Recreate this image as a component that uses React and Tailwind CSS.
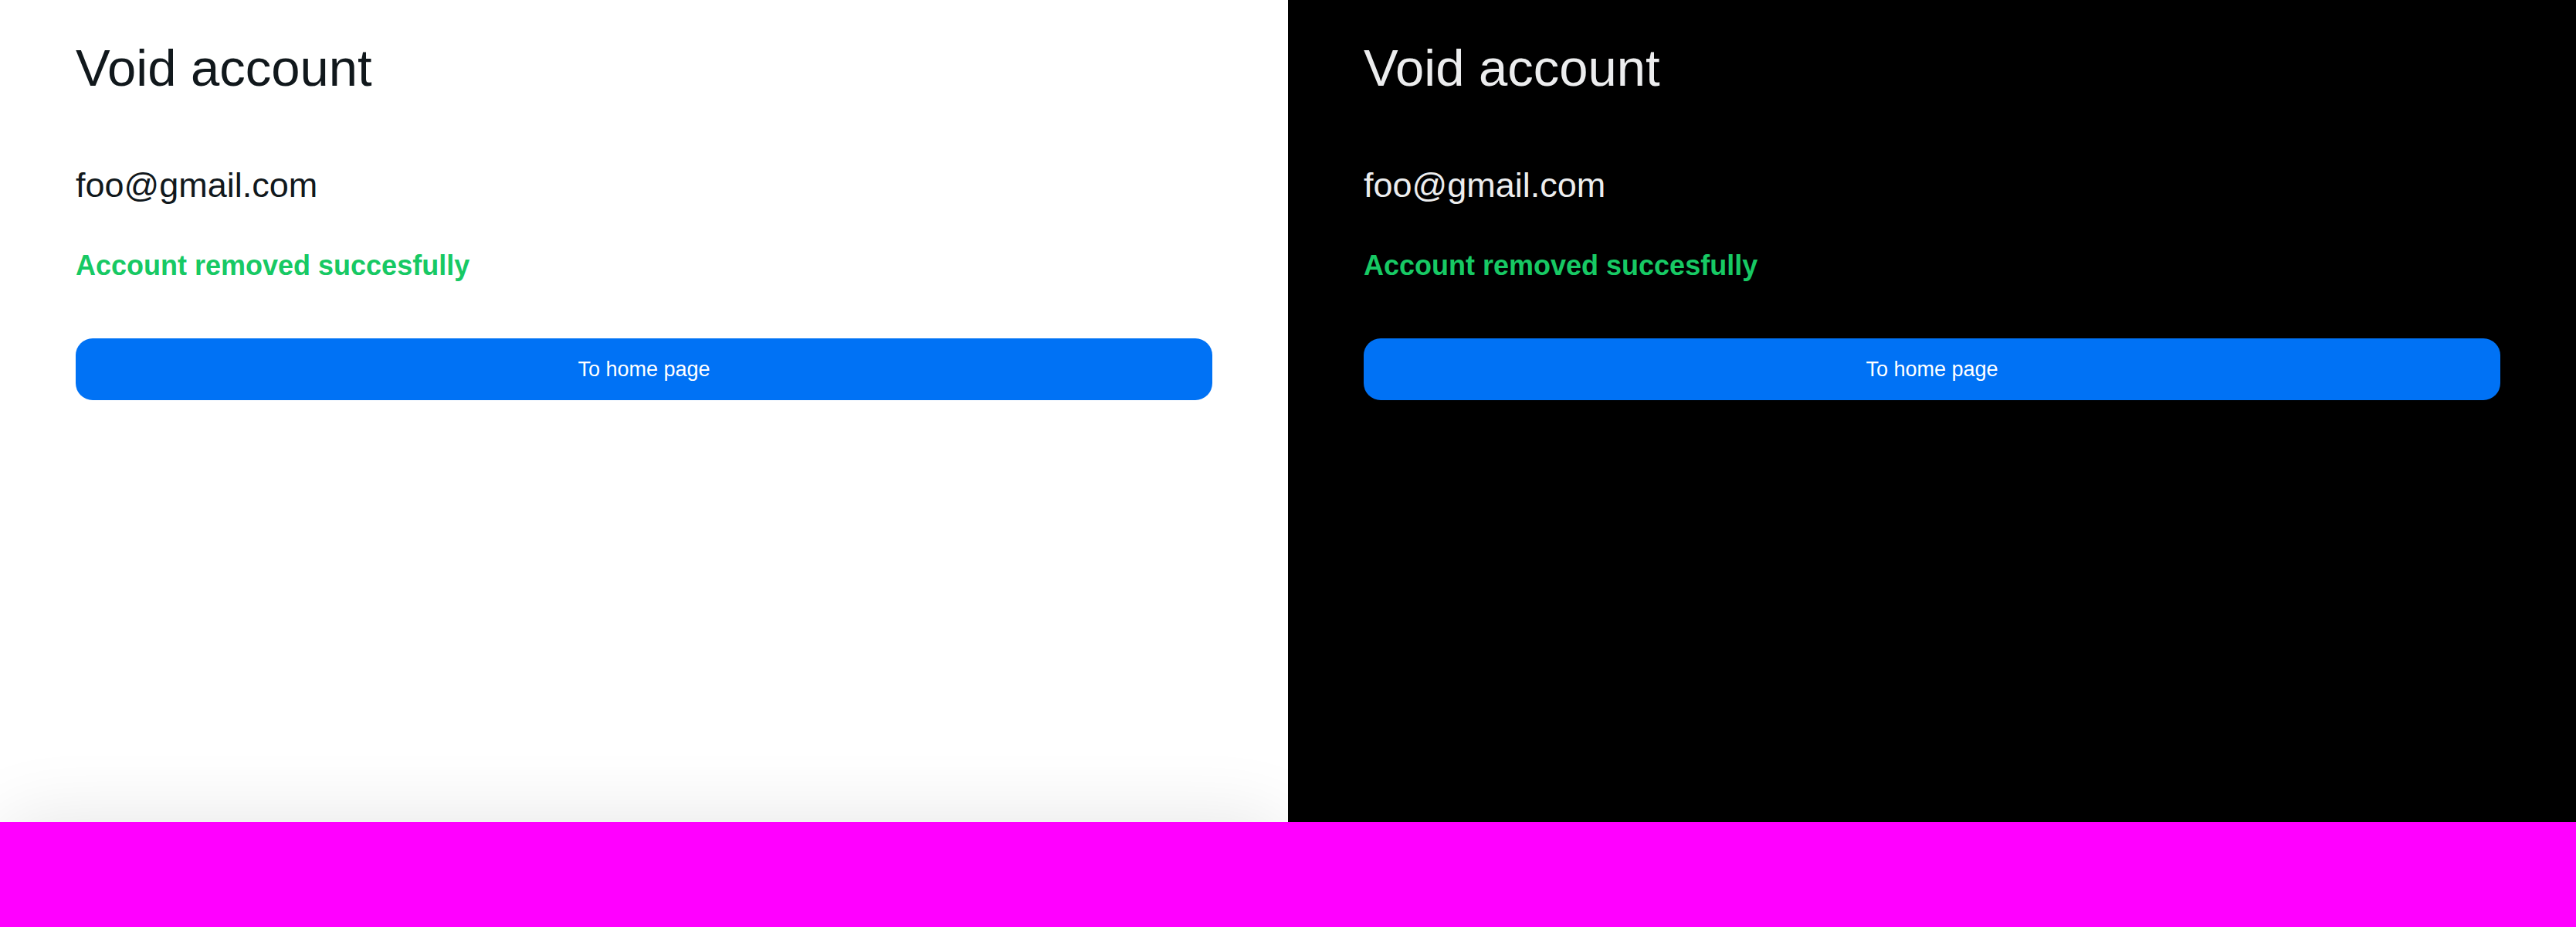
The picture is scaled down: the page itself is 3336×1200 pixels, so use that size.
import React from 'react';

// one panel of the "void account" screen, light or dark
const VoidAccount = ({ dark }) => {
  return (
    <div
      className={
        'relative h-[1064px] w-1/2 overflow-hidden ' +
        (dark ? 'bg-black text-[#ECEDEE]' : 'bg-white text-[#11181C]')
      }
    >
      <div className="relative z-10 flex flex-col px-[98px] pt-[54px]">
        <h1 className="text-[67px] leading-none font-normal">Void account</h1>
        <p className="mt-[96px] text-[45px] leading-none">foo@gmail.com</p>
        <p className="mt-[64px] text-[36px] leading-none font-semibold text-[#17C964]">
          Account removed succesfully
        </p>
        <button className="mt-[76px] flex h-[80px] w-full items-center justify-center rounded-[22px] bg-[#0072F5] text-[27px] text-white">
          To home page
        </button>
      </div>

      {/* soft shadow from the sheet below the fold */}
      {!dark && (
        <div className="absolute inset-x-0 top-full h-40 rounded-[40px] shadow-[0_0_100px_rgba(0,0,0,0.11)]" />
      )}
    </div>
  );
};

export default function App() {
  return (
    <div
      className="h-[1200px] w-[3336px] bg-[#FF00FF]"
      style={{ fontFamily: '"Liberation Sans", Arial, sans-serif' }}
    >
      <div className="flex">
        <VoidAccount />
        <VoidAccount dark />
      </div>
    </div>
  );
}
